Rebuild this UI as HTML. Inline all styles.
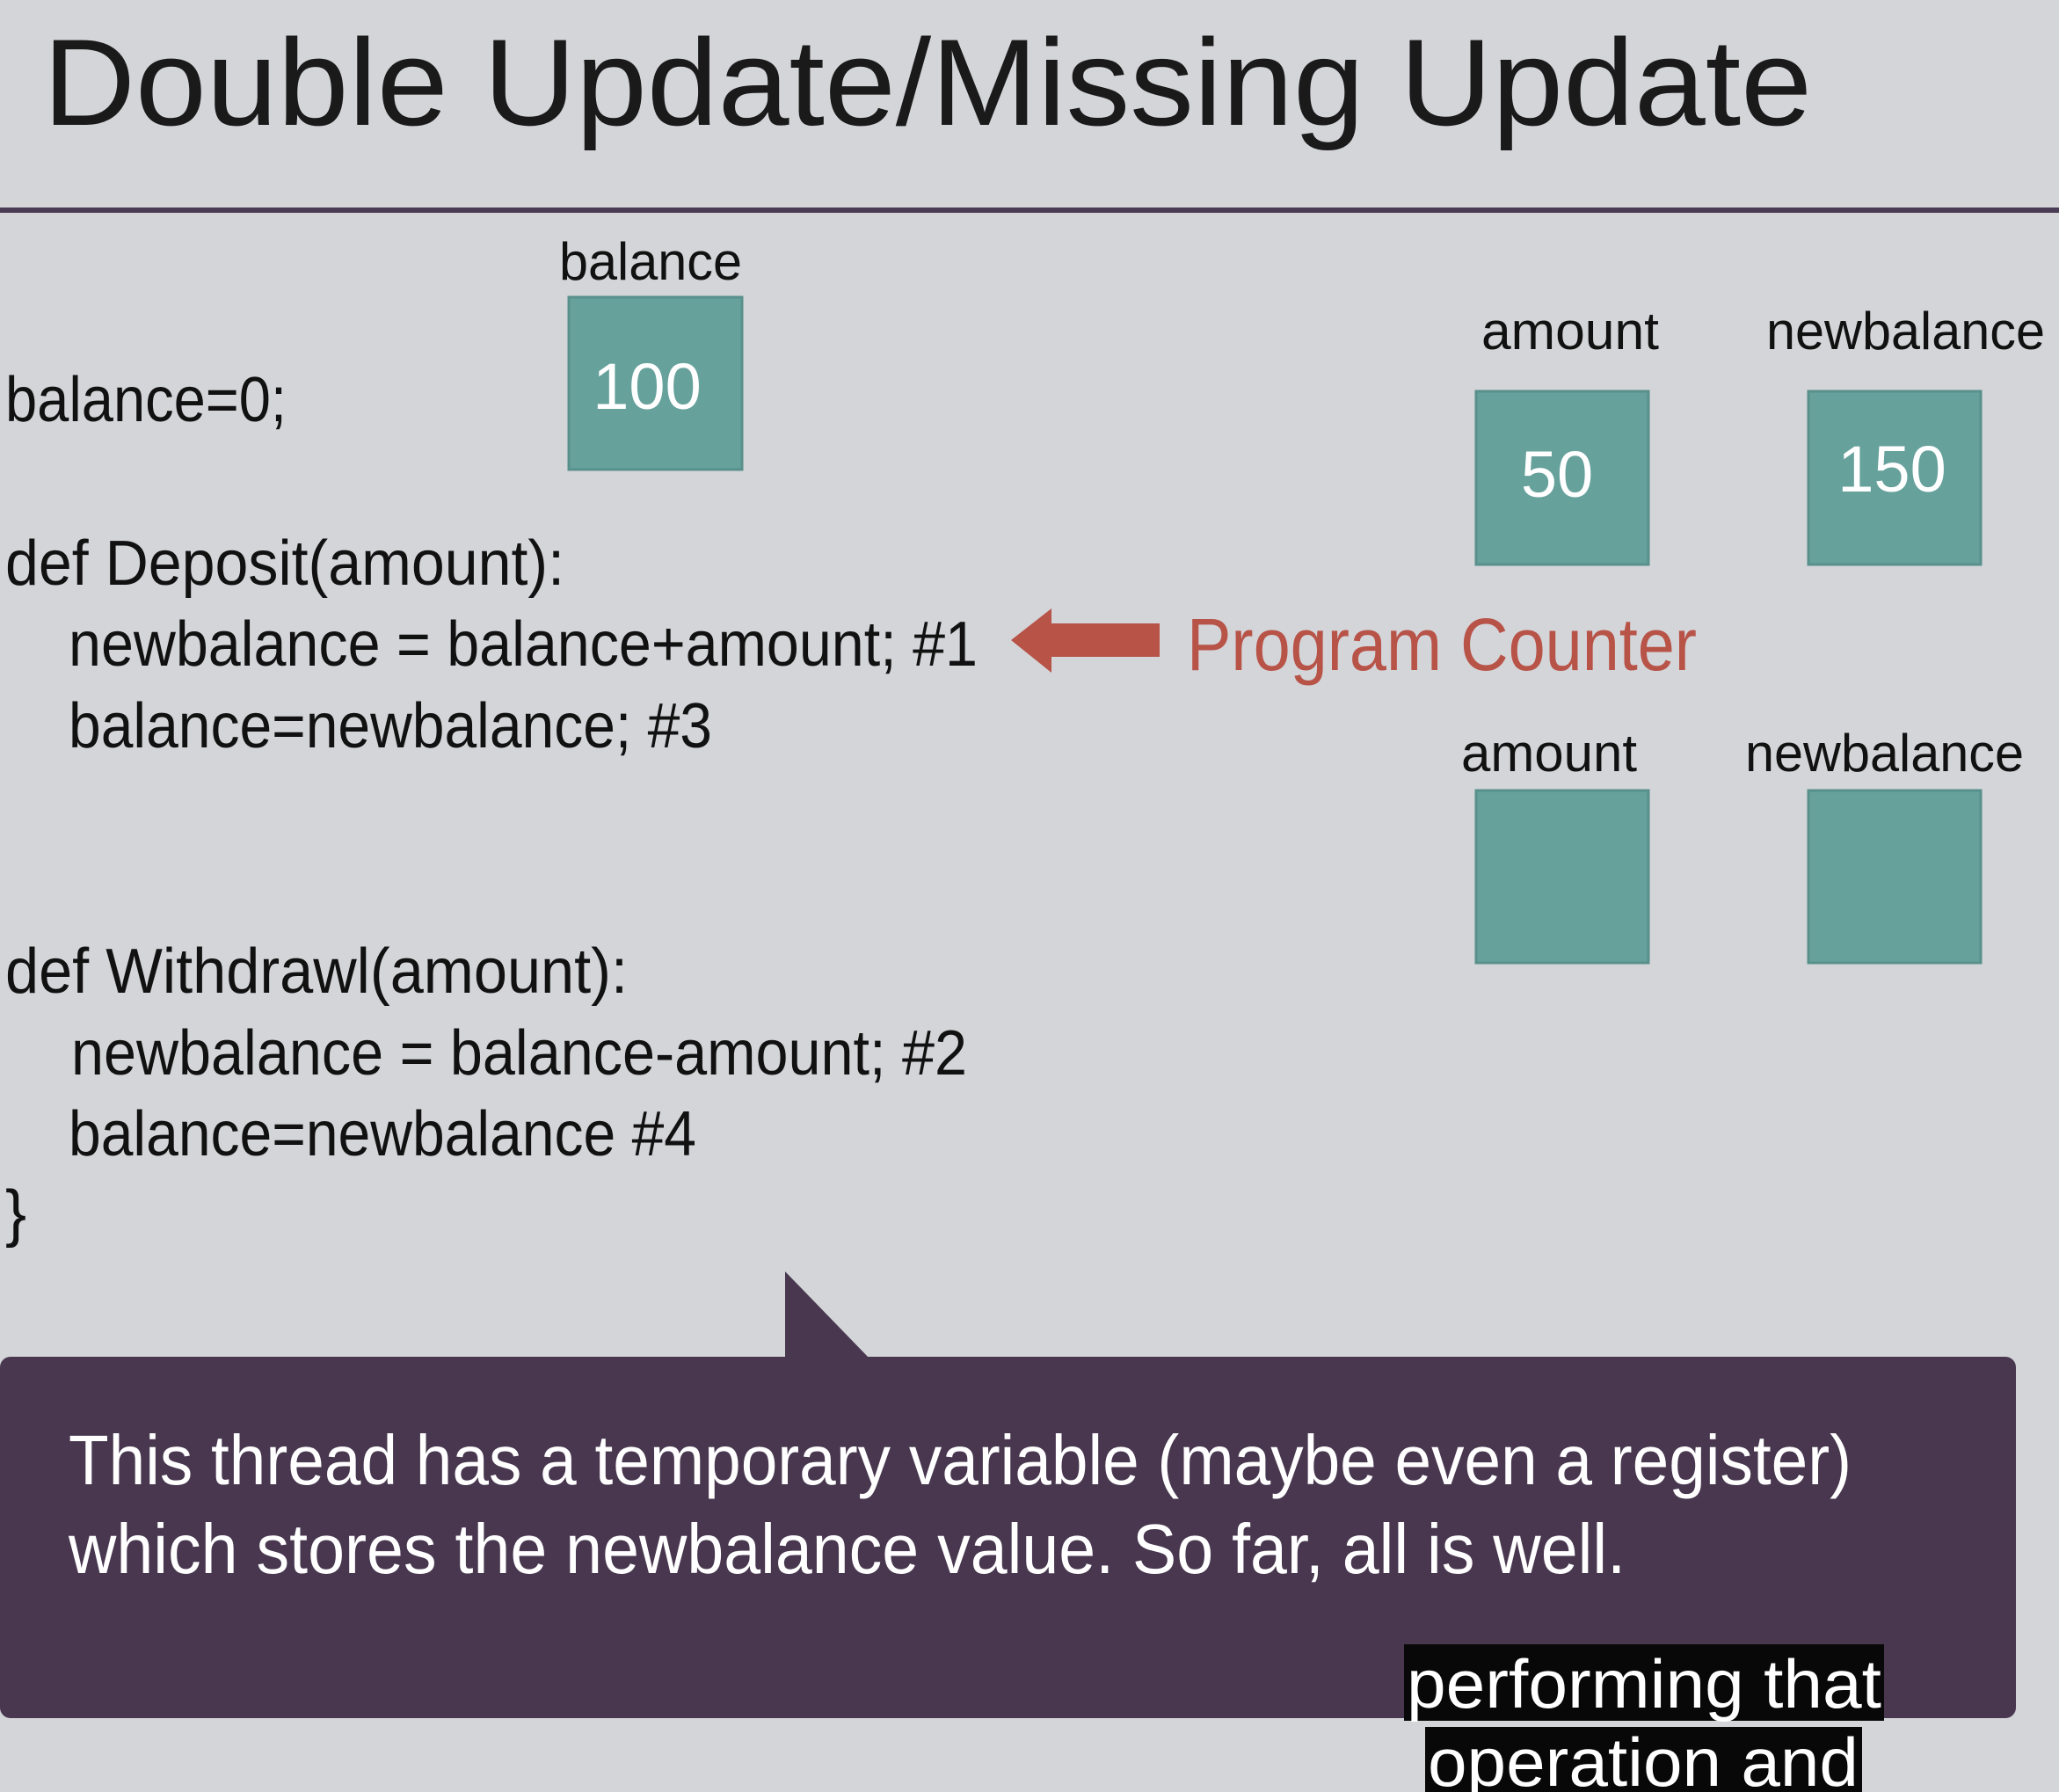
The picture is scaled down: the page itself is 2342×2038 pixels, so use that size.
<!DOCTYPE html>
<html><head><meta charset="utf-8"><style>
html,body{margin:0;padding:0;background:#d4d5d9;}
svg{display:block;}
text{font-family:"Liberation Sans",sans-serif;}
</style></head><body>
<svg width="2342" height="2038" viewBox="0 0 2342 2038" xmlns="http://www.w3.org/2000/svg">
<rect width="2342" height="2038" fill="#d4d5d9"/>
<text x="49" y="142" font-size="140" fill="#1a1a1a" textLength="2012" lengthAdjust="spacingAndGlyphs">Double Update/Missing Update</text>
<rect x="0" y="236" width="2342" height="6" fill="#4a3b55"/>

<g fill="#111">
<text x="636" y="318" font-size="60" textLength="208" lengthAdjust="spacingAndGlyphs">balance</text>
<text x="6" y="479" font-size="72" textLength="320" lengthAdjust="spacingAndGlyphs">balance=0;</text>
<text x="1685" y="397" font-size="60" textLength="202" lengthAdjust="spacingAndGlyphs">amount</text>
<text x="2009" y="397" font-size="60" textLength="317" lengthAdjust="spacingAndGlyphs">newbalance</text>
<text x="6" y="665" font-size="72" textLength="636" lengthAdjust="spacingAndGlyphs">def Deposit(amount):</text>
<text x="78" y="757" font-size="72" textLength="1034" lengthAdjust="spacingAndGlyphs">newbalance = balance+amount; #1</text>
<text x="78" y="850" font-size="72" textLength="732" lengthAdjust="spacingAndGlyphs">balance=newbalance; #3</text>
<text x="1662" y="877" font-size="60" textLength="200" lengthAdjust="spacingAndGlyphs">amount</text>
<text x="1985" y="877" font-size="60" textLength="317" lengthAdjust="spacingAndGlyphs">newbalance</text>
<text x="6" y="1129" font-size="72" textLength="708" lengthAdjust="spacingAndGlyphs">def Withdrawl(amount):</text>
<text x="81" y="1222" font-size="72" textLength="1019" lengthAdjust="spacingAndGlyphs">newbalance = balance-amount; #2</text>
<text x="78" y="1314" font-size="72" textLength="714" lengthAdjust="spacingAndGlyphs">balance=newbalance #4</text>
<text x="6" y="1404" font-size="72">}</text>
</g>

<g fill="#66a19c" stroke="#58908b" stroke-width="3">
<rect x="647" y="338" width="197" height="196"/>
<rect x="1679" y="445" width="196" height="197"/>
<rect x="2057" y="445" width="196" height="197"/>
<rect x="1679" y="899" width="196" height="196"/>
<rect x="2057" y="899" width="196" height="196"/>
</g>
<g fill="#fff" font-size="74" text-anchor="middle">
<text x="736" y="465">100</text>
<text x="1771" y="565">50</text>
<text x="2152" y="559">150</text>
</g>

<polygon points="1150,728 1196,692 1196,709 1319,709 1319,747 1196,747 1196,765" fill="#b85348"/>
<text x="1350" y="762" font-size="84" fill="#b85348" textLength="580" lengthAdjust="spacingAndGlyphs">Program Counter</text>

<polygon points="893,1446 893,1545 989,1545" fill="#48374f"/>
<rect x="0" y="1543" width="2293" height="411" rx="12" fill="#48374f"/>
<text x="78" y="1688" font-size="80" fill="#fff" textLength="2028" lengthAdjust="spacingAndGlyphs">This thread has a temporary variable (maybe even a register)</text>
<text x="78" y="1789" font-size="80" fill="#fff" textLength="1771" lengthAdjust="spacingAndGlyphs">which stores the newbalance value.  So far, all is well.</text>

<rect x="1597" y="1870" width="546" height="87" fill="#080808"/>
<text x="1600" y="1942" font-size="78" fill="#fff" textLength="540" lengthAdjust="spacingAndGlyphs">performing that</text>
<rect x="1621" y="1964" width="497" height="74" fill="#080808"/>
<text x="1624" y="2031" font-size="78" fill="#fff" textLength="490" lengthAdjust="spacingAndGlyphs">operation and</text>
</svg>
</body></html>
